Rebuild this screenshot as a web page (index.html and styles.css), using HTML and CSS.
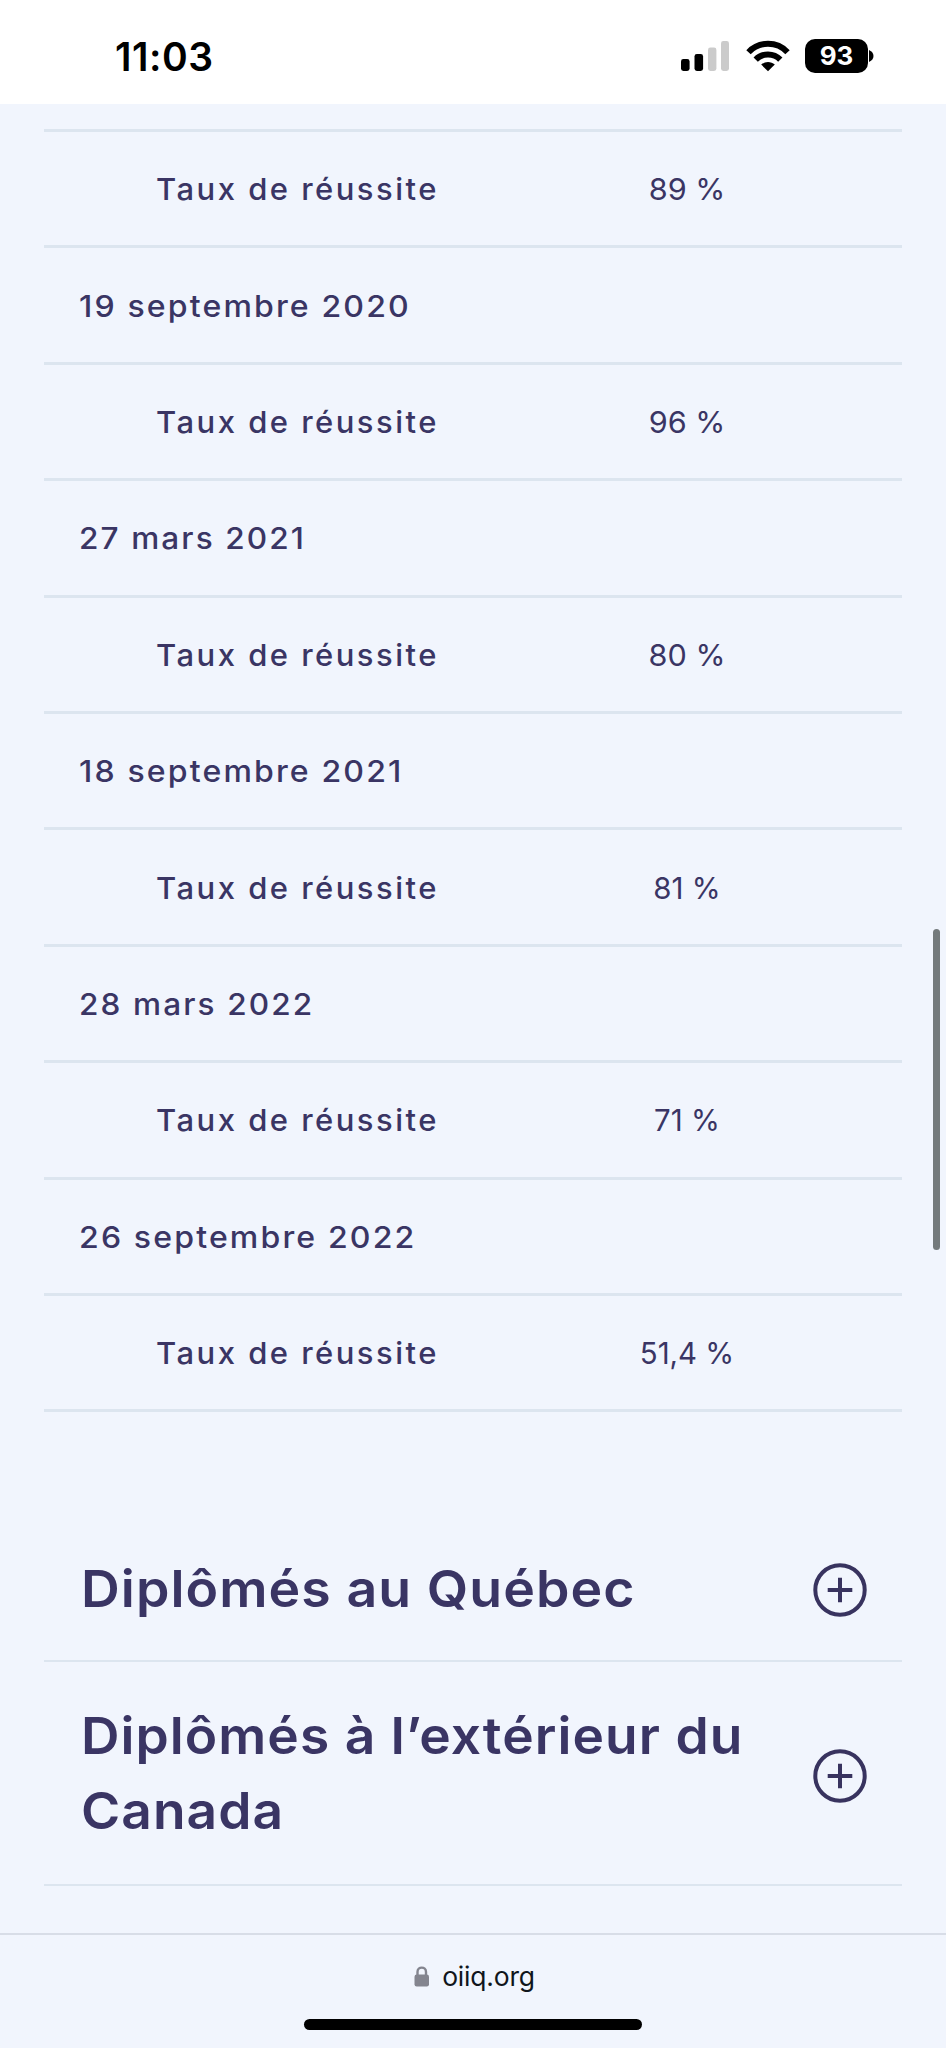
FILE: index.html
```html
<!DOCTYPE html>
<html lang="fr">
<head>
<meta charset="utf-8">
<title>oiiq.org</title>
<link rel="stylesheet" href="styles.css">
</head>
<body>
<div class="screen">
  <header class="status">
    <span class="time">11:03</span>
    <div class="indicators">
      <svg class="signal" width="48" height="30" viewBox="0 0 48 30">
        <rect x="0" y="18" width="8.6" height="12" rx="2.4"/>
        <rect x="13.5" y="13" width="8.6" height="17" rx="2.4"/>
        <rect class="off" x="27" y="6.5" width="8.4" height="23.5" rx="2.4"/>
        <rect class="off" x="40" y="0" width="8" height="30" rx="2.4"/>
      </svg>
      <svg class="wifi" width="44" height="32" viewBox="0 0 44 32">
        <path class="arc" d="M2.500 12.200C13 1 31 1 41.500 12.200"/>
        <path class="arc" d="M9.700 19.600C16.300 12.800 27.700 12.800 34.300 19.600"/>
        <path d="M22 31.300L15.200 24.600C19 21 25 21 28.800 24.600Z"/>
      </svg>
      <div class="battery"><span class="level">93</span><svg class="nub" width="5" height="12" viewBox="0 0 5 12"><path d="M0 0C6 2.500 6 9.500 0 12Z"/></svg></div>
    </div>
  </header>
  <main class="page">
    <div class="rates">
      <div class="row"><span class="label">Taux de réussite</span><span class="value">89 %</span></div>
      <div class="row"><span class="date sept">19 septembre 2020</span></div>
      <div class="row"><span class="label">Taux de réussite</span><span class="value">96 %</span></div>
      <div class="row"><span class="date mars">27 mars 2021</span></div>
      <div class="row"><span class="label">Taux de réussite</span><span class="value">80 %</span></div>
      <div class="row"><span class="date sept">18 septembre 2021</span></div>
      <div class="row"><span class="label">Taux de réussite</span><span class="value narrow">81 %</span></div>
      <div class="row"><span class="date mars">28 mars 2022</span></div>
      <div class="row"><span class="label">Taux de réussite</span><span class="value narrow">71 %</span></div>
      <div class="row"><span class="date sept">26 septembre 2022</span></div>
      <div class="row"><span class="label">Taux de réussite</span><span class="value narrow">51,4 %</span></div>
    </div>
    <section class="accordion">
      <div class="item">
        <h2>Diplômés au Québec</h2>
        <svg class="plus" width="54" height="54" viewBox="0 0 54 54"><circle cx="27" cy="27" r="24.700"/><path d="M27 14.700V39.300M14.700 27H39.300"/></svg>
      </div>
      <div class="item tall">
        <h2>Diplômés à l’extérieur du Canada</h2>
        <svg class="plus" width="54" height="54" viewBox="0 0 54 54"><circle cx="27" cy="27" r="24.700"/><path d="M27 14.700V39.300M14.700 27H39.300"/></svg>
      </div>
    </section>
    <div class="scrollbar"></div>
  </main>
  <footer class="browser">
    <div class="address">
      <svg width="16" height="21" viewBox="0 0 16 21"><rect x="0.500" y="8.500" width="14.500" height="12" rx="2.200"/><path class="shackle" d="M3.500 10V6C3.500 0.200 12 0.200 12 6V10"/></svg>
      <span>oiiq.org</span>
    </div>
    <div class="home"></div>
  </footer>
</div>
</body>
</html>
```

FILE: styles.css
```css
* { box-sizing: border-box; }
body { margin: 0; font-family: Inter, "Liberation Sans", sans-serif; }
.screen { width: 946px; height: 2048px; display: flex; flex-direction: column; background: #f1f5fd; color: #3a3564; overflow: hidden; }

.status { height: 104px; flex: none; background: #fff; color: #000; display: flex; justify-content: space-between; padding: 0 72px 0 115px; }
.time { font-size: 39px; font-weight: 600; line-height: 48px; margin-top: 33px; letter-spacing: 0.5px; }
.indicators { display: flex; padding-top: 39px; }
.signal { margin-top: 2px; }
.off { fill: #cbcbcb; }
.wifi { margin: 1px 0 0 17px; }
.arc { fill: none; stroke: #000; stroke-width: 6; }
.battery { display: flex; align-items: center; margin-left: 15px; height: 34px; }
.level { width: 63px; height: 34px; border-radius: 10px; background: #000; color: #fff; font-size: 26px; font-weight: 700; line-height: 34px; text-align: center; }
.nub { margin-left: 1px; }

.page { position: relative; flex: 1; padding: 25px 44px 0; }
.rates { border-top: 3px solid #dce5ef; }
.row { height: 116.4px; display: flex; align-items: center; padding-top: 1px; border-bottom: 3px solid #dce5ef; font-size: 30px; white-space: nowrap; }
.label { width: 344px; margin: 0 0 0 112px; font-weight: 500; letter-spacing: 2.4px; transform: scaleX(1.033); transform-origin: left; }
.date { margin-left: 35px; font-weight: 500; letter-spacing: 2px; transform-origin: left; }
.sept { transform: scaleX(1.068); }
.mars { transform: scaleX(1.052); }
.value { width: 374px; text-align: center; font-weight: 400; transform: scaleX(1.02); }
.narrow { transform: scaleX(0.98); }

.accordion { margin-top: 110px; }
.item { height: 140px; display: flex; align-items: center; justify-content: space-between; padding: 0 35px 2px 37px; border-bottom: 2px solid #dce5ef; }
.item h2 { margin-bottom: 4px; }
.tall { height: 224px; padding: 0 35px 0 37px; }
.item.tall h2 { margin-bottom: 0; transform: scaleX(1.045); }
.tall .plus { margin-top: 6px; }
h2 { margin: 0; width: 690px; font-size: 51px; line-height: 75px; font-weight: 600; letter-spacing: 1px; transform: scaleX(1.052); transform-origin: left; }
.plus { flex: none; fill: none; stroke: #38335f; stroke-width: 4; }

.scrollbar { position: absolute; right: 6px; top: 825px; width: 7px; height: 321px; border-radius: 4px; background: #747a7c; }

.browser { height: 115px; flex: none; border-top: 2px solid #d8dde7; display: flex; flex-direction: column; align-items: center; color: #10151b; }
.address { display: flex; gap: 12px; align-items: center; font-size: 26.5px; letter-spacing: -0.2px; line-height: 34px; margin-top: 24px; padding-left: 3px; }
.address svg { fill: #84858f; }
.address .shackle { fill: none; stroke: #84858f; stroke-width: 2.400; }
.home { width: 338px; height: 11px; border-radius: 6px; background: #000; margin-top: 26px; }
```
